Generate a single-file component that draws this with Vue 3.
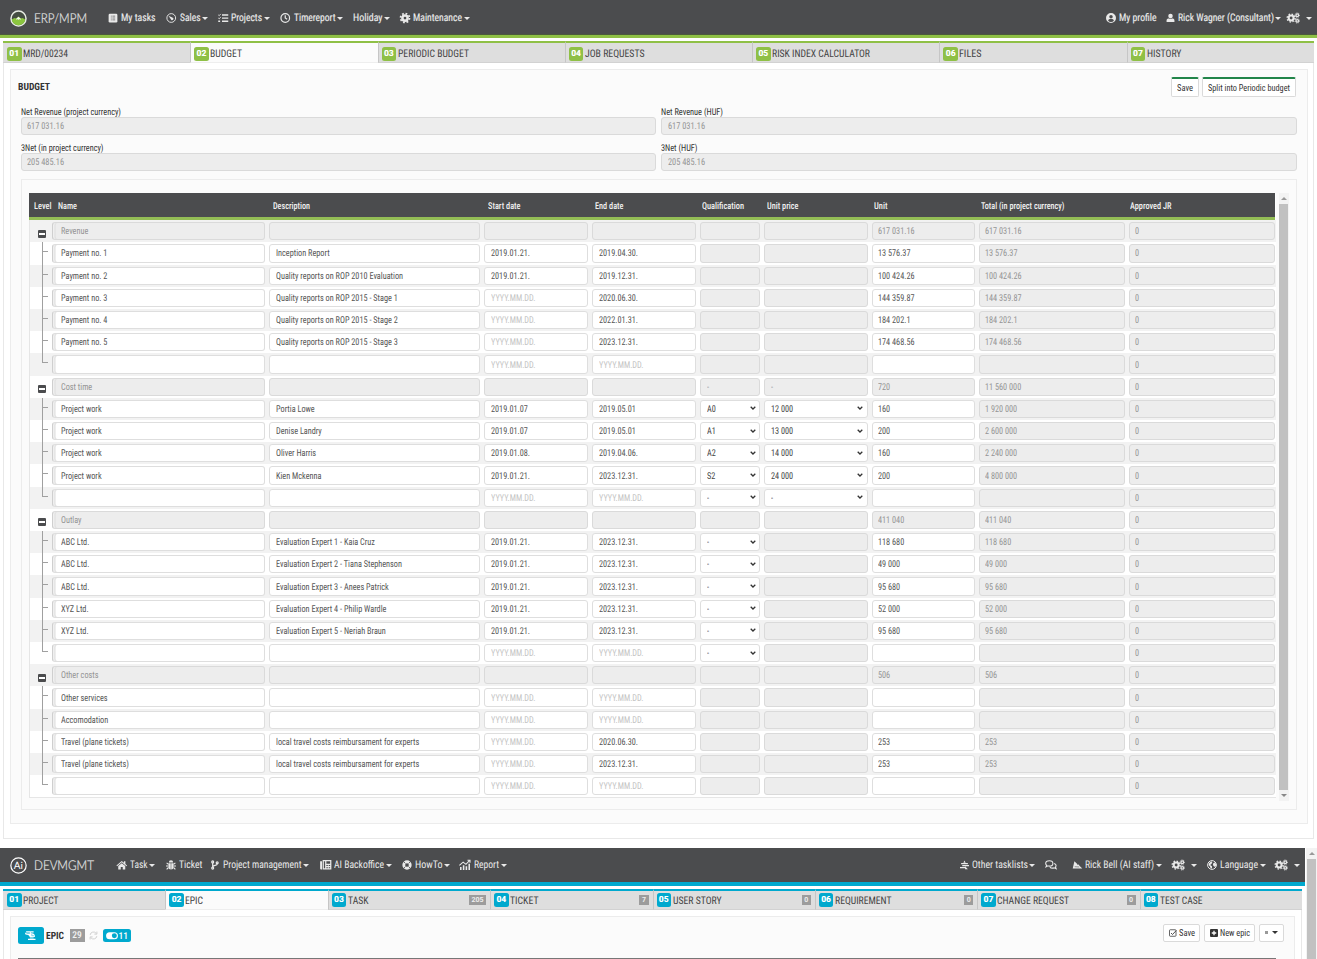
<script setup>
// Squeezes a text run to a given width in px and keeps the layout box in step.
const fit = (el, { value }) => {
  el.style.transform = 'none'
  el.style.marginRight = '0px'
  const natural = el.offsetWidth ? el.getBoundingClientRect().width : 0
  if (!natural || !value) return
  el.style.transform = `scaleX(${value / natural})`
  el.style.marginRight = `${value - natural}px`
}
const vFit = { mounted: fit }

const gear = (x, y, r, s) =>
  `<circle cx="${x}" cy="${y}" r="${r}" fill="none" stroke="currentColor" stroke-width="${s}"/>` +
  `<circle cx="${x}" cy="${y}" r="${r + s * 0.75}" fill="none" stroke="currentColor" stroke-width="${s * 0.7}" stroke-dasharray="${((r + s * 0.75) * Math.PI) / 8}"/>`

const icons = {
  tasks: '<rect x="1" y="1" width="14" height="14" rx="2"/><g stroke="#77787a" stroke-width="1.5"><path d="M4.500 5h1.500M7 5h4.500M4.500 8h1.500M7 8h4.500M4.500 11h1.500M7 11h4.500"/></g>',
  dash: '<circle cx="8" cy="8" r="7" fill="none" stroke="currentColor" stroke-width="1.5"/><path d="M3.5 4.5l7 3.2a2 2 0 1 1-2.8 2.6z"/>',
  list: '<path d="M6 2h10v2.2H6zM6 7h10v2.2H6zM6 12h10v2.2H6zM0 12h3v2.4H0z"/><path d="M0 3l1.5 1.4L4 1.5M0 8l1.5 1.4L4 6.5" fill="none" stroke="currentColor" stroke-width="1.3"/>',
  clock: '<g fill="none" stroke="currentColor" stroke-width="1.9"><circle cx="8" cy="8" r="6.9"/><path d="M8 3.5V8l3 2"/></g>',
  cog: gear(8, 8, 4.2, 4),
  cogs: gear(6.2, 8, 3.9, 3.2) + gear(16, 3.5, 2.1, 2) + gear(16, 12.5, 2.1, 2),
  profile: '<path fill-rule="evenodd" d="M8 0a8 8 0 1 0 0 16A8 8 0 0 0 8 0zm0 3a2.8 2.8 0 1 1 0 5.6A2.8 2.8 0 0 1 8 3zM3.4 12.2c.6-1.800 2-2.500 4.600-2.500s4 .7 4.600 2.500A6 6 0 0 1 8 14.200a6 6 0 0 1-4.600-2z"/>',
  user: '<circle cx="8" cy="4.500" r="4"/><path d="M1 15v-2.500C1 9.700 3 8.800 5 8.800c2 1 4 1 6 0 2 0 4 .9 4 3.700V15z"/>',
  home: '<path d="M8 1.500L-.5 8.600l1 1.300L8 3.700l7.500 6.200 1-1.300-2.700-2.300V2h-2.300v2.400z"/><path d="M8 5L2.400 9.700V15h4v-4h3.200v4h4V9.700z"/>',
  bug: '<path d="M4.500 4a3.500 3.500 0 0 1 7 0zM4 5h3.600v10C5 15 4 13 4 11zM8.400 5H12v6c0 2-1 4-3.600 4z"/><path d="M4 7L1 4.500M4 9.500H0M4 12l-3 3M12 7l3-2.500M12 9.500h4M12 12l3 3" fill="none" stroke="currentColor" stroke-width="1.800"/>',
  branch: '<g fill="none" stroke="currentColor" stroke-width="2.200"><circle cx="3" cy="2.500" r="1.700"/><circle cx="3" cy="13.500" r="1.700"/><circle cx="11" cy="4" r="1.700"/><path d="M3 4.500v7M11 6c0 3.500-7 2-8 5"/></g>',
  news: '<path fill-rule="evenodd" d="M0 2h3v13H1.500A1.500 1.500 0 0 1 0 13.500zM4 0h14v15H4zm2 2v11h2V2zm4 0v4h6V2zm0 6v1.500h2.300V8zm3.700 0v1.500H16V8zM10 11.500V13h2.300v-1.500zm3.700 0V13H16v-1.500z"/>',
  ring: '<circle cx="8" cy="8" r="5.200" fill="none" stroke="currentColor" stroke-width="4.500"/><path d="M2.500 2.500L5.500 5.500M13.500 2.500l-3 3M2.500 13.500l3-3M13.500 13.500l-3-3" stroke="#4b4c4e" stroke-width="1.300"/>',
  chart: '<path d="M1 11h2.500v5H1zM5.500 8.500H8V16H5.500zM10 10h2.500v6H10zM14.500 6H17v10h-2.500z"/><path d="M0 8.500L6 3.500l4.500 3.500L16.500 .5M13 .5h4v4" fill="none" stroke="currentColor" stroke-width="1.700"/>',
  tasksAlt: '<path d="M8 0l2 4H6zM2 4.500h12v2.300H2zM4 8h12v2.300H4zM0 11.500h10v2.300H0zM9 10l5 5.500H9z"/>',
  chat: '<g fill="none" stroke="currentColor" stroke-width="1.700"><path d="M12.500 5.500c0 2.500-2.300 4.300-5.500 4.300-.8 0-1.600-.1-2.300-.4L1.500 11l1-2.700C1.300 7.500 1 6.500 1 5.500 1 3 3.500 1.200 7 1.200s5.500 1.800 5.500 4.300z"/><path d="M14.500 5.500c3 .8 4 3.300 2.300 5.800l1 2.700-3.300-1.400c-3 .8-5.500.2-6.700-1.300"/></g>',
  shoe: '<path d="M-.5 14L2.500 1.500l5 4.500 0 1.500 2.500-.5 1.500 2.500 5 4.500z"/><path d="M3 11l8 .5" stroke="#4b4c4e"/>',
  globe: '<circle cx="8" cy="8" r="7" fill="none" stroke="currentColor" stroke-width="1.600"/><path d="M3 5l4-3 1.500 2L7 6.500l-2 1.500 3 2v3l-2 .5L4.500 10 2.500 8zM10 5l3-1.500L15 8l-2 3-2-1-1.500-2z"/>',
  heli: '<path d="M2 .5h12v1.700H9.500v1.300h1.500c3 0 5 2 5 4.500v1.500H8L5.500 6.500 1 5.500 0 2.800h1.500L3 4h5V2.200H2z"/><path d="M5 12.500h12v2H5zM8 10.500h6v1.200H8z"/><path d="M11 5v2.500h3.500" fill="none" stroke="#00a9ce" stroke-width=".8"/>',
  refresh: '<path d="M2 7a6 6 0 0 1 11-2.500M14 9a6 6 0 0 1-11 2.500M14 1v4.500H9.500M2 15v-4.500h4.500" fill="none" stroke="currentColor" stroke-width="1.700"/>',
  toggle: '<path fill-rule="evenodd" d="M6 2h8a6 6 0 0 1 0 12H6A6 6 0 0 1 6 2zm8 1.800a4.200 4.200 0 1 0 0 8.400 4.200 4.200 0 0 0 0-8.400z"/>',
  check: '<rect x="1" y="1.500" width="13" height="13" rx="1.500" fill="none" stroke="currentColor" stroke-width="1.500"/><path d="M4 8l3 3 7.500-8" fill="none" stroke="currentColor" stroke-width="1.700"/>',
  plus: '<path fill-rule="evenodd" d="M2 0h12a2 2 0 0 1 2 2v12a2 2 0 0 1-2 2H2a2 2 0 0 1-2-2V2a2 2 0 0 1 2-2zm4.700 3.500v3.200H3.500v2.600h3.200v3.200h2.600V9.300h3.200V6.700H9.300V3.500z"/>',
}
const wide = { cogs: 20, news: 18, chart: 18, chat: 19, heli: 18, toggle: 20 }
const box = (n) => `0 0 ${wide[n] || 16} 16`

// ml: space before the item, iw: icon width, w: label width
const erpLeft = [
  { icon: 'tasks', iw: 10, label: 'My tasks', w: 34.5, ml: 20 },
  { icon: 'dash', iw: 10.5, label: 'Sales', w: 20.5, caret: 1, ml: 10.5 },
  { icon: 'list', iw: 10.5, label: 'Projects', w: 31, caret: 1, ml: 11 },
  { icon: 'clock', iw: 10.5, label: 'Timereport', w: 41.5, caret: 1, ml: 11.5 },
  { label: 'Holiday', w: 29.5, caret: 1, ml: 11.5 },
  { icon: 'cog', iw: 10, label: 'Maintenance', w: 49, caret: 1, ml: 11 },
]
const erpRight = [
  { icon: 'profile', iw: 10, label: 'My profile', w: 37.5, ml: 0 },
  { icon: 'user', iw: 9, label: 'Rick Wagner (Consultant)', w: 96, caret: 1, ml: 9.5 },
  { icon: 'cogs', iw: 13, caret: 1, far: 1, ml: 7 },
]
const devLeft = [
  { icon: 'home', iw: 11.5, label: 'Task', w: 17.5, caret: 1, ml: 20.5 },
  { icon: 'bug', iw: 10, label: 'Ticket', w: 23.5, ml: 11.5 },
  { icon: 'branch', iw: 9, label: 'Project management', w: 78.5, caret: 1, ml: 9 },
  { icon: 'news', iw: 11.5, label: 'AI Backoffice', w: 50, caret: 1, ml: 11.5 },
  { icon: 'ring', iw: 10, label: 'HowTo', w: 27.5, caret: 1, ml: 11 },
  { icon: 'chart', iw: 12, label: 'Report', w: 25, caret: 1, ml: 10.5 },
]
const devRight = [
  { icon: 'tasksAlt', iw: 9, label: 'Other tasklists', w: 56, caret: 1, ml: 0 },
  { icon: 'chat', iw: 12, ml: 10.5 },
  { icon: 'shoe', iw: 9, label: 'Rick Bell (AI staff)', w: 69, caret: 1, ml: 16.5 },
  { icon: 'cogs', iw: 13, caret: 1, far: 1, ml: 11 },
  { icon: 'globe', iw: 10, label: 'Language', w: 38, caret: 1, ml: 11.5 },
  { icon: 'cogs', iw: 13, caret: 1, far: 1, ml: 10.5 },
]
const bars = { erp: [erpLeft, erpRight], dev: [devLeft, devRight] }

const erpTabs = [['MRD/00234', 45], ['BUDGET', 32], ['PERIODIC BUDGET', 71], ['JOB REQUESTS', 59.5], ['RISK INDEX CALCULATOR', 98], ['FILES', 22.5], ['HISTORY', 34.5]]
const devTabs = [['PROJECT', 35.5], ['EPIC', 18], ['TASK', 20.5, '205'], ['TICKET', 28.5, '7'], ['USER STORY', 48.5, '0'], ['REQUIREMENT', 56.5, '0'], ['CHANGE REQUEST', 72, '0'], ['TEST CASE', 42.5]]

const fields = [
  ['Net Revenue (project currency)', 100, '617 031.16'],
  ['Net Revenue (HUF)', 62, '617 031.16'],
  ['3Net (in project currency)', 82.5, '205 485.16'],
  ['3Net (HUF)', 36.5, '205 485.16'],
]
const heads = [['Level', 17.5], ['Name', 19], ['Description', 37], ['Start date', 32.5], ['End date', 28.5], ['Qualification', 42], ['Unit price', 31.5], ['Unit', 13.5], ['Total (in project currency)', 83.5], ['Approved JR', 41.5]]

const D = 'YYYY.MM.DD.'
// name, description, start, end, qualification, unit price, unit, total
// A leading '#' marks a read-only cell, '>' a select.
const g = (name, q, p, u) => ({ group: true, cells: ['#' + name, '#', '#', '#', '#' + q, '#' + p, '#' + u[0], '#' + u[1], '#0'] })
const r = (n, d, s, e, q, p, u, t = u) => ({ cells: [n, d, s, e, q, p, u, '#' + t, '#0'] })
const rows = [
  g('Revenue', '', '', ['617 031.16', '617 031.16']),
  r('Payment no. 1', 'Inception Report', '2019.01.21.', '2019.04.30.', '#', '#', '13 576.37'),
  r('Payment no. 2', 'Quality reports on ROP 2010 Evaluation', '2019.01.21.', '2019.12.31.', '#', '#', '100 424.26'),
  r('Payment no. 3', 'Quality reports on ROP 2015 - Stage 1', D, '2020.06.30.', '#', '#', '144 359.87'),
  r('Payment no. 4', 'Quality reports on ROP 2015 - Stage 2', D, '2022.01.31.', '#', '#', '184 202.1'),
  r('Payment no. 5', 'Quality reports on ROP 2015 - Stage 3', D, '2023.12.31.', '#', '#', '174 468.56'),
  r('', '', D, D, '#', '#', ''),
  g('Cost time', '-', '-', ['720', '11 560 000']),
  r('Project work', 'Portia Lowe', '2019.01.07', '2019.05.01', '>A0', '>12 000', '160', '1 920 000'),
  r('Project work', 'Denise Landry', '2019.01.07', '2019.05.01', '>A1', '>13 000', '200', '2 600 000'),
  r('Project work', 'Oliver Harris', '2019.01.08.', '2019.04.06.', '>A2', '>14 000', '160', '2 240 000'),
  r('Project work', 'Kien Mckenna', '2019.01.21.', '2023.12.31.', '>S2', '>24 000', '200', '4 800 000'),
  r('', '', D, D, '>-', '>-', ''),
  g('Outlay', '', '', ['411 040', '411 040']),
  r('ABC Ltd.', 'Evaluation Expert 1 - Kaia Cruz', '2019.01.21.', '2023.12.31.', '>-', '#', '118 680'),
  r('ABC Ltd.', 'Evaluation Expert 2 - Tiana Stephenson', '2019.01.21.', '2023.12.31.', '>-', '#', '49 000'),
  r('ABC Ltd.', 'Evaluation Expert 3 - Anees Patrick', '2019.01.21.', '2023.12.31.', '>-', '#', '95 680'),
  r('XYZ Ltd.', 'Evaluation Expert 4 - Philip Wardle', '2019.01.21.', '2023.12.31.', '>-', '#', '52 000'),
  r('XYZ Ltd.', 'Evaluation Expert 5 - Neriah Braun', '2019.01.21.', '2023.12.31.', '>-', '#', '95 680'),
  r('', '', D, D, '>-', '#', ''),
  g('Other costs', '', '', ['506', '506']),
  r('Other services', '', D, D, '#', '#', ''),
  r('Accomodation', '', D, D, '#', '#', ''),
  r('Travel (plane tickets)', 'local travel costs reimbursament for experts', D, '2020.06.30.', '#', '#', '253'),
  r('Travel (plane tickets)', 'local travel costs reimbursament for experts', D, '2023.12.31.', '#', '#', '253'),
  r('', '', D, D, '#', '#', ''),
]
rows.forEach((row, i) => { row.last = !row.group && (!rows[i + 1] || rows[i + 1].group) })
const kind = (c) => ({ off: c[0] === '#', select: c[0] === '>', hint: c === D })
const text = (c) => c.replace(/^[#>]/, '')
const pad = (i) => String(i + 1).padStart(2, '0')
</script>

<template>
  <main class="screen">
    <section class="erp">
      <header class="bar">
        <svg class="logo" viewBox="0 0 34 34">
          <circle cx="17" cy="17" r="15" fill="#454d42" stroke="#e8ece4" stroke-width="3" />
          <path d="M3.500 19l5.500-3 3.500 1 4.500-4 4.500 4 3.500-1 5.500 3c-1 7-7 11.500-13.500 11.500S4.500 26 3.500 19z" fill="#8bc53f" />
          <path d="M12 18l5-4.500 5 4.500-1.500 1.500-2-1.500-1.500 2-1.500-2-2 1.500z" fill="#f4f8ee" />
        </svg>
        <span class="brand"><span v-fit="53">ERP/MPM</span></span>
        <nav v-for="(side, s) in bars.erp" :key="s" :class="['menu', { right: s }]">
          <a v-for="(it, i) in side" :key="i" :style="{ marginLeft: it.ml + 'px' }">
            <svg v-if="it.icon" class="ico" :viewBox="box(it.icon)" :style="{ width: it.iw + 'px' }" v-html="icons[it.icon]"></svg>
            <span v-if="it.label" v-fit="it.w" class="t">{{ it.label }}</span>
            <i v-if="it.caret" :class="['caret', { far: it.far }]"></i>
          </a>
        </nav>
      </header>

      <div class="page">
        <div class="tabs">
          <div v-for="(t, i) in erpTabs" :key="i" :class="['tab', { active: i === 1 }]">
            <b class="num">{{ pad(i) }}</b><span v-fit="t[1]" class="t">{{ t[0] }}</span>
          </div>
        </div>
        <div class="panel">
          <div class="title">
            <b v-fit="32" class="t">BUDGET</b>
            <div class="actions">
              <button class="btn green"><span v-fit="16" class="t">Save</span></button>
              <button class="btn green"><span v-fit="82" class="t">Split into Periodic budget</span></button>
            </div>
          </div>
          <div class="fields">
            <label v-for="(f, i) in fields" :key="i">
              <span v-fit="f[1]" class="t">{{ f[0] }}</span>
              <div class="cell off"><span v-fit="37" class="t">{{ f[2] }}</span></div>
            </label>
          </div>
          <div class="frame">
            <div class="table">
              <div class="thead">
                <div v-for="(h, i) in heads" :key="i"><span v-fit="h[1]" class="t">{{ h[0] }}</span></div>
              </div>
              <div v-for="(row, i) in rows" :key="i" :class="['row', { group: row.group, last: row.last }]">
                <div class="level"><i v-if="row.group" class="minus"></i><i v-else class="twig"></i></div>
                <div v-for="(c, j) in row.cells" :key="j" :class="['cell', { first: j === 0 }, kind(c)]">
                  <span class="t sq">{{ text(c) }}</span>
                  <svg v-if="kind(c).select" class="chev" viewBox="0 0 6 4"><path d="M.7.8L3 3 5.300.8" fill="none" stroke="#333" stroke-width="1.300" /></svg>
                </div>
              </div>
            </div>
            <div class="scroll"><i class="up"></i><div class="thumb"></div><i class="down"></i></div>
          </div>
        </div>
      </div>
    </section>

    <section class="dev">
      <div class="devmain">
        <header class="bar">
          <svg class="logo ai" viewBox="0 0 34 34">
            <circle cx="17" cy="17" r="15.300" fill="none" stroke="#fff" stroke-width="2.400" />
            <text x="16.500" y="24" text-anchor="middle" font-family="Lato, sans-serif" font-weight="400" font-size="20" fill="#fff">Ai</text>
          </svg>
          <span class="brand"><span v-fit="60">DEVMGMT</span></span>
          <nav v-for="(side, s) in bars.dev" :key="s" :class="['menu', { right: s }]">
            <a v-for="(it, i) in side" :key="i" :style="{ marginLeft: it.ml + 'px' }">
              <svg v-if="it.icon" class="ico" :viewBox="box(it.icon)" :style="{ width: it.iw + 'px' }" v-html="icons[it.icon]"></svg>
              <span v-if="it.label" v-fit="it.w" class="t">{{ it.label }}</span>
              <i v-if="it.caret" :class="['caret', { far: it.far }]"></i>
            </a>
          </nav>
        </header>
        <div class="page">
          <div class="tabs">
            <div v-for="(t, i) in devTabs" :key="i" :class="['tab', { active: i === 1 }]">
              <b class="num">{{ pad(i) }}</b><span v-fit="t[1]" class="t">{{ t[0] }}</span>
              <span v-if="t[2]" class="count">{{ t[2] }}</span>
            </div>
          </div>
          <div class="panel">
            <div class="epic">
              <span class="heli"><svg class="ico" :viewBox="box('heli')" v-html="icons.heli"></svg></span>
              <b v-fit="18" class="t">EPIC</b>
              <span class="sum">29</span>
              <svg class="ico refresh" viewBox="0 0 16 16" v-html="icons.refresh"></svg>
              <span class="pill"><svg class="ico" :viewBox="box('toggle')" v-html="icons.toggle"></svg>11</span>
              <div class="actions">
                <button class="btn"><svg class="ico" viewBox="0 0 16 16" v-html="icons.check"></svg><span v-fit="16" class="t">Save</span></button>
                <button class="btn"><svg class="ico" viewBox="0 0 16 16" v-html="icons.plus"></svg><span v-fit="30" class="t">New epic</span></button>
                <button class="btn more"><i class="dot"></i><i class="caret"></i></button>
              </div>
            </div>
            <div class="rule"></div>
          </div>
        </div>
      </div>
      <div class="scroll"><i class="up"></i><div class="thumb"></div></div>
    </section>
  </main>
</template>

<style>
html, body { margin: 0; overflow: hidden; background: #fff; }
</style>

<style scoped>
.screen { width: 1317px; height: 959px; overflow: hidden; background: #fff; font-family: "Roboto Condensed", Roboto, sans-serif; color: #333; text-rendering: geometricPrecision; }
.screen * { box-sizing: border-box; }
.t, .brand > span { display: inline-block; flex: none; white-space: nowrap; transform-origin: 0 50%; }
.erp { --accent: #8fc046; height: 848px; }
.dev { --accent: #00a9ce; height: 111px; display: flex; }
.devmain { width: 1305px; height: 111px; overflow: hidden; }

.bar { display: flex; align-items: center; height: 38px; padding-left: 10px; background: #4b4c4e; border-bottom: 3px solid var(--accent); box-shadow: inset 0 -1px 0 #4c5a3c; color: #e9e9e9; }
.dev .bar { height: 37.500px; border-bottom-width: 4px; box-shadow: none; }
.logo { width: 17px; height: 17px; flex: none; margin-top: 2px; }
.brand { width: 54px; margin-left: 7px; font: 300 13.500px/16px Lato, sans-serif; color: #e4e4e4; -webkit-text-stroke: .2px #e4e4e4; }
.dev .brand { width: 61px; }
.menu { display: flex; align-items: center; font-size: 10.500px; font-weight: 400; -webkit-text-stroke: .15px currentColor; line-height: 12px; height: 34px; }
.menu .t { padding-top: 1px; }
.menu.right { margin-left: auto; padding-right: 6px; }
.menu a { display: flex; align-items: center; gap: 3px; }
.dev .menu { -webkit-text-stroke: 0; }
.ico { height: 10px; fill: currentColor; flex: none; display: block; overflow: visible; }
.caret { border: 0 solid transparent; border-width: 3px 3px 0; border-top-color: currentColor; margin-left: -1.500px; }
.menu .caret { margin-top: 1px; margin-right: -1px; }
.menu .caret.far { margin-left: 3px; }

.page { margin: 3px 3px 0; border: 1px solid #e8e8e8; border-top: 0; height: 798px; }
.tabs { display: flex; margin: 0 -1px; }
.tab { display: flex; align-items: center; flex: 1 1 0; height: 22px; padding: 2px 4px 0 3px; background: #dedede; border-top: 2px solid var(--accent); border-bottom: 1px solid #d2d2d2; border-left: 1px solid #c6c6c6; font-size: 10.500px; line-height: 12px; color: #444; }
.tab:first-child { border-left: 0; padding-left: 4px; }
.tab .t { padding-top: 1px; }
.tab.active { background: #fbfbfb; border-bottom-color: #eee; }
.num { width: 14.500px; height: 14px; margin-right: 1.500px; border-radius: 2.500px; background: var(--accent); color: #fff; font: 900 8.500px/15px Roboto, sans-serif; text-align: center; }
.count { margin-left: auto; padding: 0 2.500px; height: 10px; background: #9c9c9c; color: #eee; font: 700 7px/11px Roboto, sans-serif; }

.panel { margin: 6px 5.500px 0 6px; border: 1.500px solid #ececec; background: #fbfbfb; height: 755px; padding: 0 9.500px; }
.title { display: flex; align-items: center; height: 36px; margin-left: -3px; padding-bottom: 3px; font-size: 10px; }
.title > .t { padding-top: 1px; }
.actions { margin-left: auto; display: flex; gap: 3px; margin-right: 1px; }
.btn { display: flex; align-items: center; justify-content: center; gap: 2px; height: 18px; padding: 0 5px; margin: 0; background: #fff; border: 1px solid #dadada; border-radius: 2px; color: #333; font: 400 9px/12px "Roboto Condensed", Roboto, sans-serif; }
.btn.green { height: 20px; padding-top: 1px; border-top: 2.500px solid #22854a; font-size: 9.500px; }

.fields { display: grid; grid-template-columns: 1fr 1fr; column-gap: 5px; }
.fields label { display: block; height: 35.500px; padding-top: 1px; font-size: 9.500px; line-height: 11px; }
.fields .cell { height: 18px; margin-top: -1px; }
.cell { display: flex; align-items: center; min-width: 0; height: 18.200px; padding: 1px 4px 0 5.500px; background: #fff; border: 1.500px solid #dedede; border-radius: 3px; color: #555; font-size: 9.500px; line-height: 11px; }
.cell.off { background: #ededed; color: #949494; border-color: #dadada; }
.cell.hint { color: #c3c3c3; }
.cell.select { justify-content: space-between; color: #444; padding-right: 3.500px; }
.sq { transform: scaleX(.865); }
.chev { width: 6px; height: 4px; flex: none; margin-top: -2px; }

.frame { display: flex; margin-top: 1.500px; height: 631px; padding: 13px 7px 0; border: 1.500px solid #ececec; }
.table { width: 1247px; height: 605px; background: #fff; border: 1px solid #e6e6e6; border-width: 0 0 1px 1px; }
.thead { display: grid; grid-template-columns: 23.500px 215px 215px 107.500px 107px 64.500px 107px 107px 149.500px 1fr; align-items: center; height: 27.700px; margin-left: -1px; margin-right: 1px; padding: 3px 0 0 5.500px; background: #4b4c4e; border-bottom: 3px solid #93bd55; color: #f0f0f0; font-size: 9.500px; font-weight: 500; line-height: 11px; }
.row { display: grid; grid-template-columns: 18.700px 213px 211px 104px 104px 60px 103.500px 103px 146px 146px; column-gap: 4px; align-items: center; height: 22.210px; }
.row:nth-child(even) { background: #f2f2f2; }
.level { height: 22.200px; position: relative; }
.cell.first { border-left: 1px solid #cfcfcf; box-shadow: inset 1.500px 0 0 #f0f0f0, inset 2.500px 0 0 #dcdcdc; padding-left: 7.500px; }
.minus { position: absolute; left: 8.500px; top: 9.500px; width: 8px; height: 8px; background: #fff; border: solid #4b4c4e; border-width: 3px 1.500px; border-radius: 1px; }
.twig { position: absolute; left: 12px; top: 0; width: 6px; height: 22.200px; border-left: 1.200px solid #a0a0a0; }
.twig::after { content: ""; display: block; margin-top: 9px; border-top: 1px solid #a0a0a0; }
.last .twig { height: 10px; }

.scroll { display: flex; flex-direction: column; align-items: center; width: 10px; margin-left: 3px; background: #f3f3f3; }
.frame .scroll { height: 608px; }
.scroll .thumb { flex: 1; width: 9px; background: #c1c1c1; }
.up, .down { height: 11px; display: flex; align-items: center; }
.up::after { content: ""; border: 3px solid transparent; border-bottom-color: #999; border-top: 0; }
.down::after { content: ""; border: 3px solid transparent; border-top-color: #888; border-bottom: 0; }
.dev .scroll { width: 11px; margin-left: 1px; }

.dev .page { margin-right: 3px; height: 100px; }
.dev .tab { height: 21px; padding-top: 1px; }
.dev .panel { height: 90px; margin-right: 6.500px; padding: 0 9.500px 0 6.500px; }
.epic { display: flex; align-items: center; height: 41px; font-size: 10px; padding-bottom: 3px; }
.epic > .t { padding-top: 1px; }
.heli { display: flex; align-items: center; justify-content: center; width: 26.500px; height: 17px; margin-right: 2px; border-radius: 2.500px; background: var(--accent); color: #fff; }
.heli .ico { width: 13px; }
.sum { width: 15px; height: 13px; margin: 0 4.500px 0 5.500px; background: #9c9c9c; color: #f2f2f2; font-size: 9.500px; font-weight: 500; line-height: 14.500px; text-align: center; }
.refresh { width: 9px; height: 9px; color: #cfcfcf; }
.pill { display: flex; align-items: center; gap: 1px; height: 13px; width: 28px; margin-left: 4.500px; padding: 1px 2px 0 3px; border-radius: 2.500px; background: var(--accent); color: #fff; font-size: 9.500px; font-weight: 500; }
.pill .ico { width: 12px; height: 9.500px; margin-top: -1px; }
.epic .actions { margin-right: 0; margin-top: -6px; gap: 4px; }
.epic .btn { padding: 0 4.500px; }
.epic .btn .ico { width: 8px; height: 8px; }
.epic .btn .t { font-size: 9.500px; }
.btn.more { width: 25px; gap: 6px; }
.dot { width: 3px; height: 3px; background: #999; }
.rule { height: 2px; margin-right: 8px; background: #777; }
</style>
